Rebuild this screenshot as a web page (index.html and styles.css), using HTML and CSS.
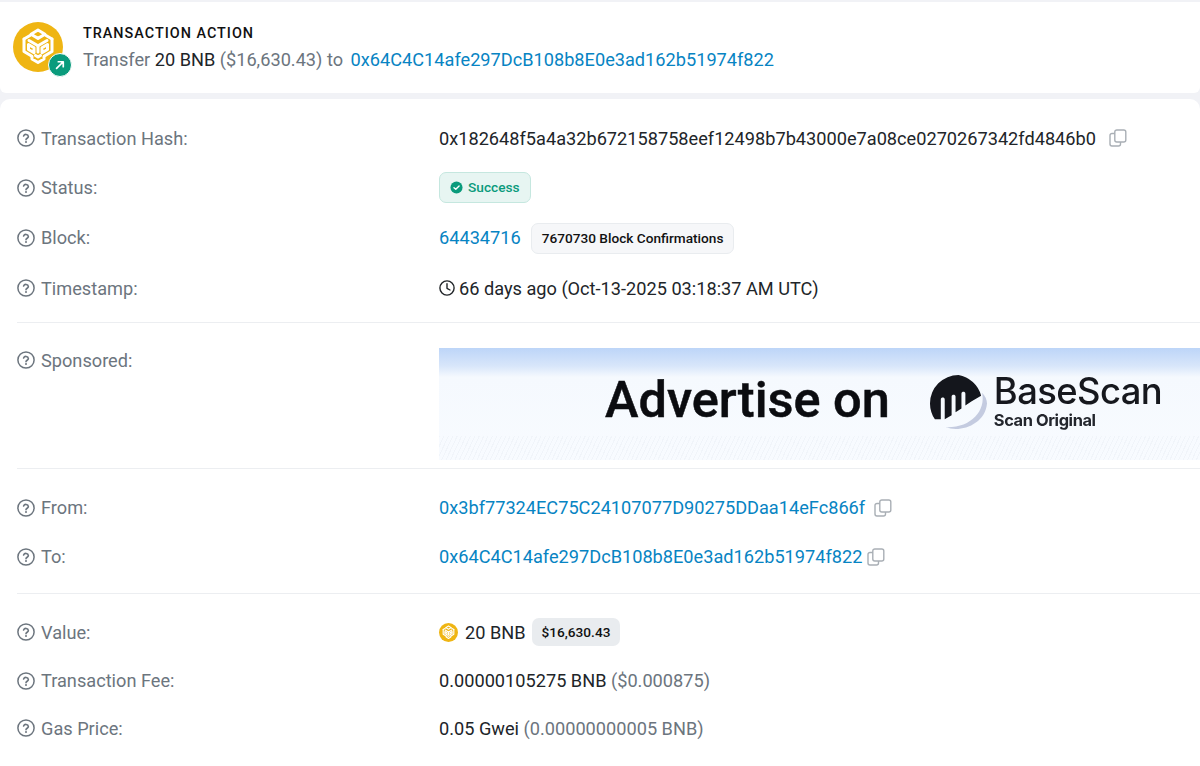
FILE: index.html
```html
<!DOCTYPE html>
<html lang="en">
<head>
<meta charset="utf-8">
<title>Transaction Details</title>
<link rel="stylesheet" href="styles.css">
</head>
<body>
<svg class="defs" width="0" height="0" aria-hidden="true">
  <defs>
    <symbol id="bnb" viewBox="0 0 50 50">
      <g fill="none" stroke="#fff" stroke-width="3" stroke-linejoin="round" stroke-linecap="round">
        <path d="M25 8 32 12.200 25 16.400 18 12.200Z"/>
        <path d="M11 17 17 13.500M39 17 33 13.500"/>
        <path d="M11 17V29.500L18.500 34M39 17V29.500L31.500 34"/>
        <path d="M16 18.500 25 23.800 34 18.500"/>
        <path d="M25 23.800V30"/>
        <path d="M15.500 22.500V27.500L21 30.800V25.800ZM34.500 22.500V27.500L29 30.800V25.800Z"/>
        <path d="M19 34.500V37L25 40.500 31 37V34.500"/>
        <path d="M22.500 33.500 25 35 27.500 33.500"/>
      </g>
    </symbol>
    <symbol id="help" viewBox="0 0 18 18">
      <circle cx="9" cy="9" r="8.100" fill="none" stroke="currentColor" stroke-width="1.500"/>
      <path d="M6.600 7a2.500 2.500 0 0 1 4.800.6c0 1.500-2.400 1.800-2.400 3.100" fill="none" stroke="currentColor" stroke-width="1.600" stroke-linecap="round"/>
      <circle cx="9" cy="13.100" r="1" fill="currentColor"/>
    </symbol>
    <symbol id="copy" viewBox="0 0 18 18">
      <rect x="5.800" y="1" width="11" height="12" rx="2" fill="none" stroke="currentColor" stroke-width="1.400"/>
      <path d="M5.800 4.500H3A2 2 0 0 0 1 6.500V15a2 2 0 0 0 2 2h6.500a2 2 0 0 0 2-2v-2" fill="none" stroke="currentColor" stroke-width="1.400"/>
    </symbol>
  </defs>
</svg>

<section class="card action">
  <div class="token">
    <svg class="token-logo"><use href="#bnb"/></svg>
    <span class="token-badge">
      <svg viewBox="0 0 14 14" class="token-arrow"><path d="M3 11 10.500 3.500M5 3.200h5.800V9" fill="none" stroke="#fff" stroke-width="2" stroke-linecap="round" stroke-linejoin="round"/></svg>
    </span>
  </div>
  <div class="action-text">
    <h2 class="action-title">TRANSACTION ACTION</h2>
    <p class="action-line"><span class="muted">Transfer</span> <span class="dark">20 BNB</span> <span class="muted">($16,630.43)</span> <span class="muted">to</span> <a class="link action-link">0x64C4C14afe297DcB108b8E0e3ad162b51974f822</a></p>
  </div>
</section>

<main class="card details">
  <div class="row row-hash">
    <div class="label"><svg class="help"><use href="#help"/></svg>Transaction Hash:</div>
    <div class="value">0x182648f5a4a32b672158758eef12498b7b43000e7a08ce0270267342fd4846b0<svg class="copy copy-hash"><use href="#copy"/></svg></div>
  </div>
  <div class="row row-status">
    <div class="label"><svg class="help"><use href="#help"/></svg>Status:</div>
    <div class="value">
      <span class="pill-success">
        <svg viewBox="0 0 14 14" class="check"><circle cx="7" cy="7" r="6.500" fill="#0a9b7c"/><path d="M4.300 7.200 6.200 9 9.800 5.300" fill="none" stroke="#fff" stroke-width="1.500" stroke-linecap="round" stroke-linejoin="round"/></svg>
        Success
      </span>
    </div>
  </div>
  <div class="row row-block">
    <div class="label"><svg class="help"><use href="#help"/></svg>Block:</div>
    <div class="value"><a class="link">64434716</a><span class="pill-confirm">7670730 Block Confirmations</span></div>
  </div>
  <div class="row row-time">
    <div class="label"><svg class="help"><use href="#help"/></svg>Timestamp:</div>
    <div class="value">
      <svg viewBox="0 0 16 16" class="clock"><circle cx="8" cy="8" r="7.100" fill="none" stroke="currentColor" stroke-width="1.400"/><path d="M8 3.800V8.300L11 10" fill="none" stroke="currentColor" stroke-width="1.400" stroke-linecap="round" stroke-linejoin="round"/></svg>
      <span class="time-text">66 days ago (Oct-13-2025 03:18:37 AM UTC)</span>
    </div>
  </div>
  <hr class="divider divider-a">
  <div class="row row-sponsored">
    <div class="label label-top"><svg class="help"><use href="#help"/></svg>Sponsored:</div>
    <div class="ad">
      <span class="ad-title">Advertise on</span>
      <svg viewBox="0 0 60 60" class="ad-logo">
        <path d="M54 19C58 38 42 55 17 54 31 60 57 52 59 30 59 26 57 22 54 19Z" fill="#c4cbe0"/>
        <path d="M30 1A29 29 0 0 0 1 30c0 6 2 12 5 16l6 0V26c0-1.500 1-2 2-2s2 .5 2 2v20l7-4V23c0-1.500 1-2 2-2s2 .5 2 2v16l6-4V20c0-1.500 1-2 2-2s2 .5 2 2v12l6-4 10-6A29 29 0 0 0 30 1Z" fill="#14161c"/>
      </svg>
      <span class="ad-brand">
        <span class="ad-name">BaseScan</span>
        <span class="ad-sub">Scan Original</span>
      </span>
    </div>
  </div>
  <hr class="divider">
  <div class="row row-from">
    <div class="label"><svg class="help"><use href="#help"/></svg>From:</div>
    <div class="value"><a class="link">0x3bf77324EC75C24107077D90275DDaa14eFc866f</a><svg class="copy copy-from"><use href="#copy"/></svg></div>
  </div>
  <div class="row row-to">
    <div class="label"><svg class="help"><use href="#help"/></svg>To:</div>
    <div class="value"><a class="link">0x64C4C14afe297DcB108b8E0e3ad162b51974f822</a><svg class="copy copy-to"><use href="#copy"/></svg></div>
  </div>
  <hr class="divider divider-c">
  <div class="row row-value">
    <div class="label"><svg class="help"><use href="#help"/></svg>Value:</div>
    <div class="value">
      <span class="coin"><svg class="coin-logo"><use href="#bnb"/></svg></span>
      <span class="coin-amount">20 BNB</span>
      <span class="pill-usd">$16,630.43</span>
    </div>
  </div>
  <div class="row row-fee">
    <div class="label"><svg class="help"><use href="#help"/></svg>Transaction Fee:</div>
    <div class="value">0.00000105275 BNB&nbsp;<span class="muted">($0.000875)</span></div>
  </div>
  <div class="row row-gas">
    <div class="label"><svg class="help"><use href="#help"/></svg>Gas Price:</div>
    <div class="value">0.05 Gwei&nbsp;<span class="muted">(0.00000000005 BNB)</span></div>
  </div>
</main>
</body>
</html>
```

FILE: styles.css
```css
* { box-sizing: border-box; }
html, body { margin: 0; padding: 0; }
body {
  width: 1200px;
  height: 766px;
  overflow: hidden;
  background: #f1f2f6;
  font-family: Roboto, "Liberation Sans", sans-serif;
  font-size: 18.180px;
  color: #1f2229;
  padding-top: 2px;
}
.defs { position: absolute; }
.card { background: #fff; }
.action {
  height: 91px;
  display: flex;
  align-items: flex-start;
  padding: 20px 0 0 13px;
  border-radius: 0 0 6px 6px;
}
.token { position: relative; width: 50px; height: 50px; flex: none; }
.token-logo {
  width: 50px; height: 50px;
  background: #efb513;
  border-radius: 50%;
  display: block;
}
.token-badge {
  position: absolute;
  left: 35px; top: 31px;
  width: 24px; height: 24px;
  border-radius: 50%;
  background: #0a9b7c;
  border: 1px solid #fff;
  display: flex;
  align-items: center;
  justify-content: center;
}
.token-arrow { width: 12px; height: 12px; }
.action-text { margin-left: 20px; }
.action-title {
  margin: 3px 0 0;
  font-size: 14.400px;
  line-height: 18px;
  font-weight: 500;
  letter-spacing: 1px;
  color: #111;
}
.action-line { margin: 4px 0 0; line-height: 26px; white-space: nowrap; }
.muted { color: #6c757e; }
.dark { color: #212529; }
.link { color: #0784c3; text-decoration: none; }
.action-link { margin-left: 3px; }

.details {
  margin-top: 6px;
  height: 680px;
  padding-top: 14px;
  border-radius: 10px 10px 0 0;
}
.row { display: flex; align-items: center; padding-left: 17px; white-space: nowrap; }
.label {
  width: 422px;
  flex: none;
  color: #6c757e;
  display: flex;
  align-items: center;
}
.help {
  width: 18px; height: 18px;
  margin-right: 6px;
  color: #6c757e;
  flex: none;
}
.value { display: flex; align-items: center; color: #212529; }
.copy { width: 18px; height: 18px; color: #a9afb5; flex: none; }
.copy-hash { margin-left: 13px; }
.copy-from { margin-left: 9px; }
.copy-to { margin-left: 5px; }

.row-hash { height: 50px; }
.row-status { height: 49px; }
.row-block { height: 51px; }
.row-time { height: 50px; }
.divider { margin: 0 0 0 17px; border: 0; border-top: 1px solid #eceef1; }
.divider-a { margin-top: 9px; }
.divider-c { margin-top: 12px; }

.pill-success {
  height: 31px;
  margin-bottom: 1px;
  padding: 0 10px;
  display: inline-flex;
  align-items: center;
  gap: 5px;
  font-size: 13.700px;
  font-weight: 500;
  color: #0a9b7c;
  background: #e7f5f2;
  border: 1px solid #c5e7df;
  border-radius: 7px;
}
.check { width: 13px; height: 13px; }
.pill-confirm {
  height: 31px;
  margin: 1px 0 0 10px;
  padding: 0 10px;
  display: inline-flex;
  align-items: center;
  font-size: 13.650px;
  font-weight: 500;
  color: #111;
  background: #f6f7f9;
  border: 1px solid #e9ecef;
  border-radius: 7px;
}
.clock { width: 16px; height: 16px; margin-right: 4px; color: #212529; }

.row-sponsored { align-items: flex-start; padding-top: 25px; height: 145px; }
.label-top { height: 24px; }
.ad {
  width: 761px;
  height: 112px;
  flex: none;
  display: flex;
  align-items: center;
  padding-left: 166px;
  background:
    repeating-linear-gradient(115deg, rgba(205, 212, 224, .16) 0 1px, transparent 1px 4px) bottom / 100% 24px no-repeat,
    linear-gradient(180deg, #bdd5f8 0, #d8e6fa 16%, #f5f9fe 26%, #f8fbff 100%);
}
.ad-title {
  font-size: 50.500px;
  line-height: 1;
  font-weight: 500;
  color: #0b0c10;
  -webkit-text-stroke: .5px #0b0c10;
  filter: blur(.3px);
  margin-bottom: 8px;
}
.ad-logo { width: 59px; height: 59px; margin-left: 39px; margin-bottom: 2px; flex: none; }
.ad-brand { display: flex; flex-direction: column; margin-left: 6px; margin-bottom: 6px; filter: blur(.3px); }
.ad-name { font-family: Inter, sans-serif; font-size: 36.400px; line-height: 38px; font-weight: 500; color: #16181e; letter-spacing: -.6px; }
.ad-sub { font-family: Inter, sans-serif; font-size: 16.400px; line-height: 20px; font-weight: 700; color: #23262d; letter-spacing: -.4px; }

.row-from { height: 49px; margin-top: 14px; }
.row-to { height: 49px; }
.row-value { height: 50px; margin-top: 13px; }
.row-fee { height: 47px; }
.row-gas { height: 48px; }
.coin-logo { width: 19px; height: 19px; background: #efb513; border-radius: 50%; display: block; }
.coin-amount { margin-left: 7px; }
.pill-usd {
  height: 28px;
  margin-left: 6px;
  padding: 0 10px;
  display: inline-flex;
  align-items: center;
  font-size: 13.650px;
  font-weight: 500;
  color: #111;
  background: #e9ecef;
  border-radius: 7px;
}
```
